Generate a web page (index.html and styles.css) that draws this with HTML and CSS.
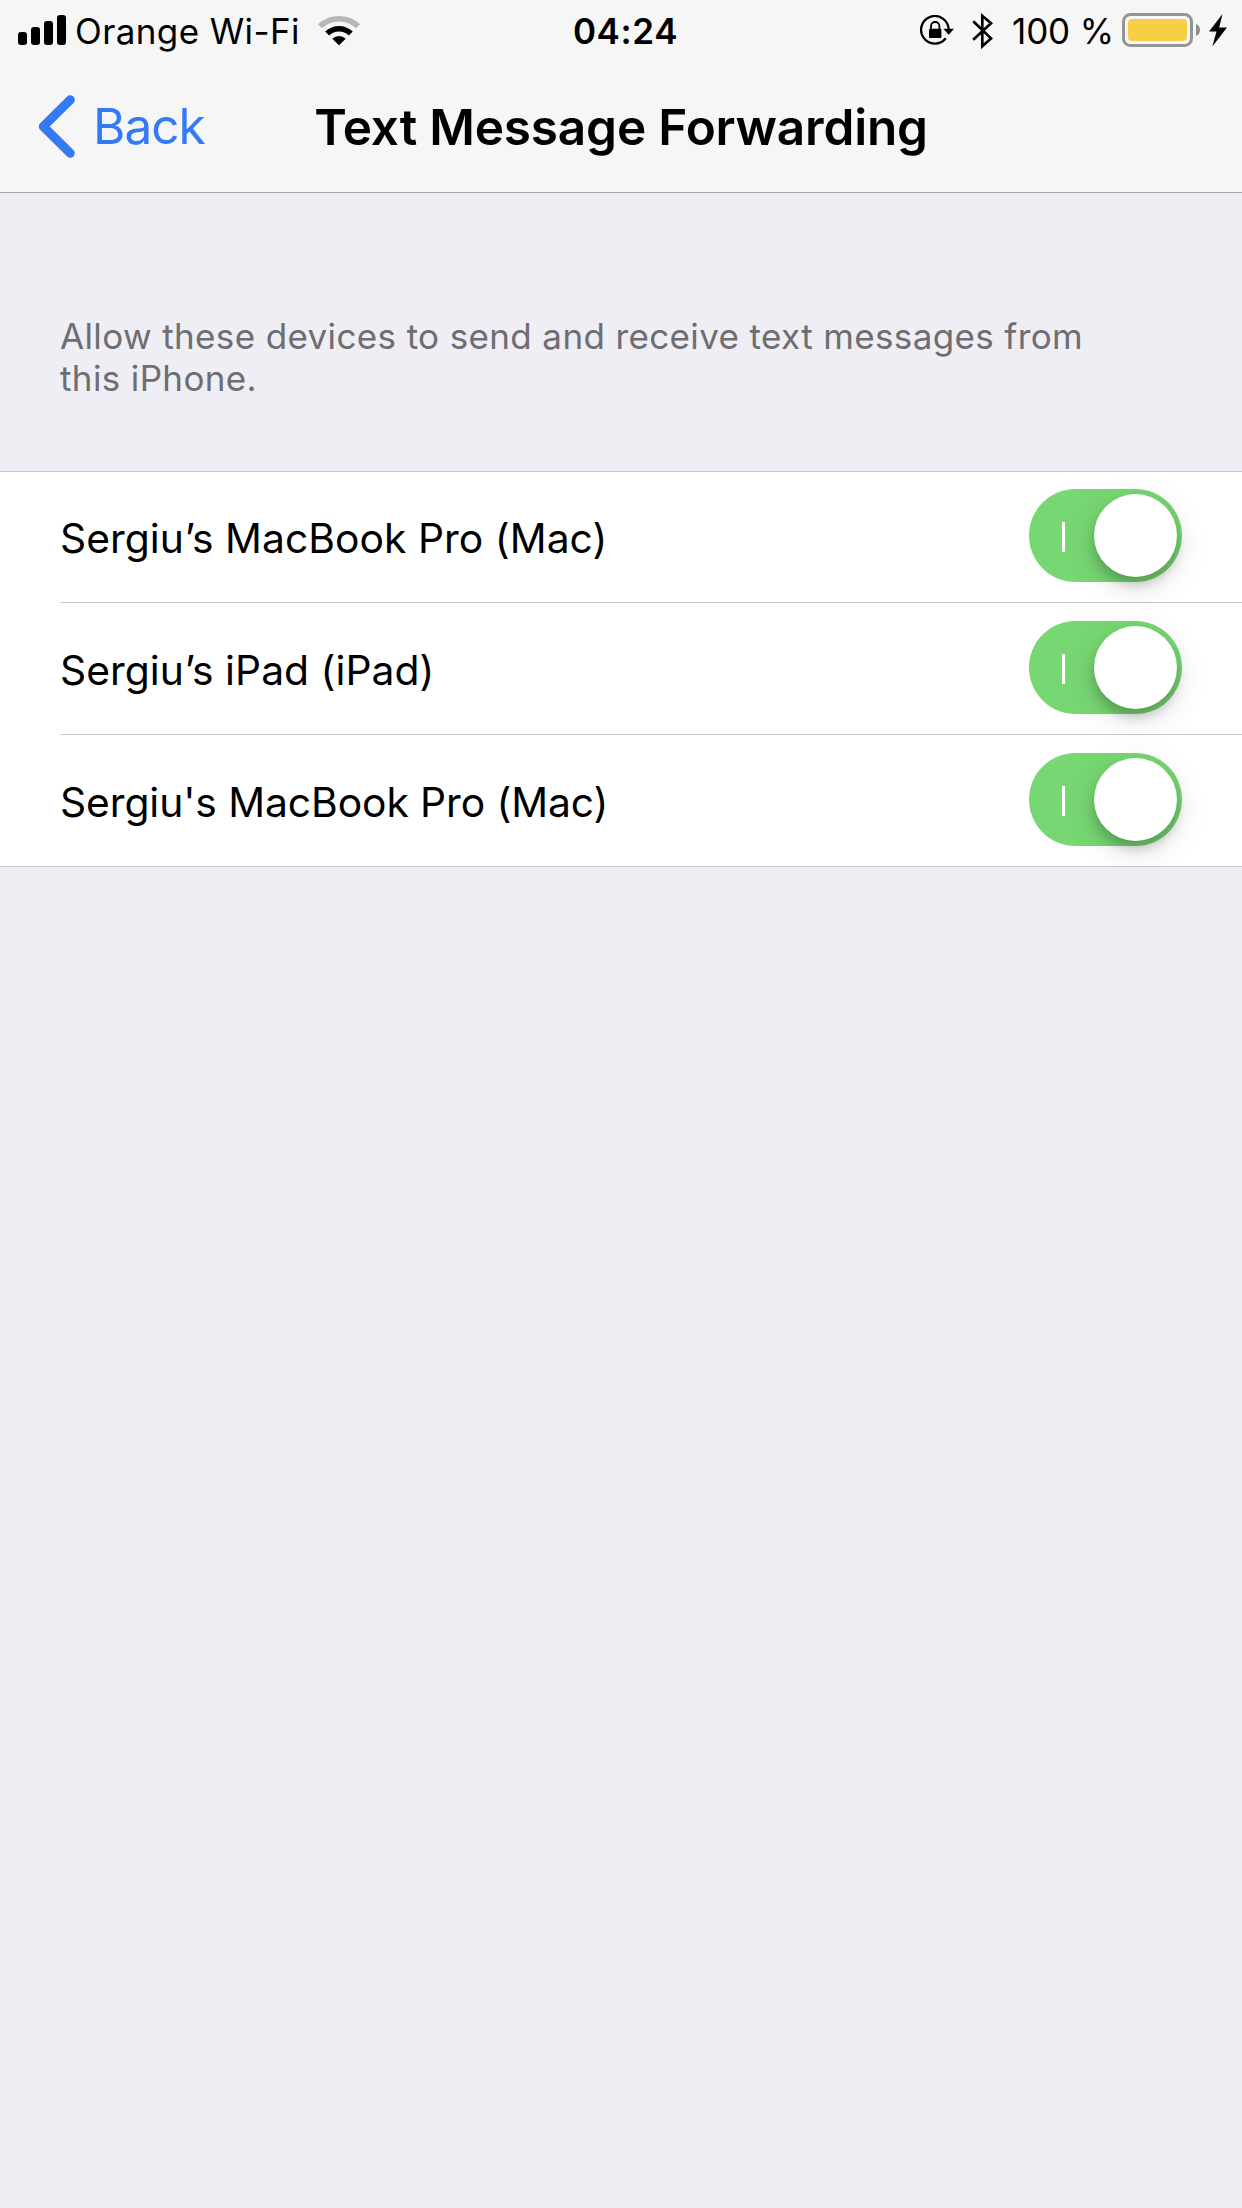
FILE: index.html
```html
<!DOCTYPE html>
<html lang="en">
<head>
<meta charset="utf-8">
<title>Text Message Forwarding</title>
<link rel="stylesheet" href="styles.css">
</head>
<body>
<header class="header">
  <div class="status">
    <div class="status-left">
      <svg class="signal" width="48" height="30" viewBox="0 0 48 30">
        <rect x="0" y="17" width="9" height="13" rx="3"/>
        <rect x="13" y="12" width="9" height="18" rx="3"/>
        <rect x="26" y="6" width="9" height="24" rx="3"/>
        <rect x="39" y="0" width="9" height="30" rx="3"/>
      </svg>
      <span class="carrier">Orange Wi-Fi</span>
      <svg class="wifi" width="42" height="30" viewBox="0 0 42 30">
        <path d="M0 9.3A30.5 30.5 0 0 1 42 9.3L38 13.2A24.6 24.6 0 0 0 4 13.2Z" fill="#b8b8b8"/>
        <path d="M7.2 16.6A20 20 0 0 1 34.8 16.6L30.8 20.6A14 14 0 0 0 11.2 20.6Z"/>
        <path d="M14.3 23.7A9.6 9.6 0 0 1 27.7 23.7L21 30.3Z"/>
      </svg>
    </div>
    <span class="time">04:24</span>
    <div class="status-right">
      <svg class="lock" width="34" height="30" viewBox="0 0 34 30">
        <path d="M28.700 15A13.800 13.800 0 1 0 25.800 23.300" fill="none" stroke="#000" stroke-width="2.300"/>
        <path d="M23.300 13.700H34L28.700 19.800Z"/>
        <rect x="9" y="13.700" width="12.400" height="9.300" rx="1"/>
        <path d="M11 15V11.200A4.200 4.200 0 0 1 19.400 11.200V15" fill="none" stroke="#000" stroke-width="1.800"/>
      </svg>
      <svg class="bluetooth" width="22" height="38" viewBox="0 0 22 38">
        <path d="M1.200 9.200 19 26.400 10.300 34.200V3.800L19 11.200 1.200 27.800" fill="none" stroke="#000" stroke-width="2.700"/>
      </svg>
      <span class="percent">100 %</span>
      <svg class="battery" width="79" height="34" viewBox="0 0 79 34">
        <rect x="1.500" y="1.500" width="68" height="31" rx="7" fill="none" stroke="#949494" stroke-width="3"/>
        <rect x="6" y="6" width="59" height="22" rx="4" fill="#f7ce46"/>
        <path d="M74 11Q78 12.500 78 17T74 23Z" fill="#8e8e8e"/>
      </svg>
      <svg class="bolt" width="18" height="33" viewBox="0 0 18 33">
        <path d="M13.500 0 0 17.500H7.500L3.300 32.500 18 13.500H10.200Z"/>
      </svg>
    </div>
  </div>
  <nav class="nav">
    <a class="back">
      <svg class="chevron" width="37" height="63" viewBox="0 0 37 63">
        <path d="M32.300 4.700 5.300 31.500 32.300 58.300" fill="none" stroke="#347af6" stroke-width="9" stroke-linecap="round" stroke-linejoin="round"/>
      </svg>
      <span class="back-label">Back</span>
    </a>
    <h1 class="title">Text Message Forwarding</h1>
  </nav>
</header>
<main>
  <p class="note">Allow these devices to send and receive text messages from this iPhone.</p>
  <ul class="devices">
    <li class="device"><span class="name">Sergiu’s MacBook Pro (Mac)</span><span class="toggle"><span class="mark"></span><span class="knob"></span></span></li>
    <li class="device"><span class="name">Sergiu’s iPad (iPad)</span><span class="toggle"><span class="mark"></span><span class="knob"></span></span></li>
    <li class="device"><span class="name name-straight">Sergiu's MacBook Pro (Mac)</span><span class="toggle"><span class="mark"></span><span class="knob"></span></span></li>
  </ul>
</main>
</body>
</html>
```
FILE: styles.css
```css
* { box-sizing: border-box; margin: 0; padding: 0; }
body {
  min-height: 2208px;
  background: #efeef4;
  color: #000;
  font-family: Inter, "Liberation Sans", sans-serif;
}
svg { display: block; flex: none; }

.header { height: 193px; background: #f6f6f6; border-bottom: 1px solid #a8a7ac; }
.status {
  display: grid;
  grid-template-columns: 1fr auto 1fr;
  height: 62px;
  padding: 0 15px 0 18px;
  font-size: 35px;
  line-height: 62px;
  white-space: nowrap;
}
.status-left, .status-right { display: flex; align-items: flex-start; }
.status-right { justify-content: flex-end; }
.signal { margin-top: 15px; }
.carrier { margin-left: 9px; letter-spacing: 0.39px; }
.wifi { margin: 15px 0 0 18px; }
.time { font-weight: 600; letter-spacing: 0.62px; margin-left: 6px; }
.lock { margin-top: 15px; }
.bluetooth { margin: 12px 0 0 18px; }
.percent { margin-left: 18px; letter-spacing: -0.13px; }
.battery { margin: 13px 0 0 8px; }
.bolt { margin: 14px 0 0 8px; }

.nav {
  display: grid;
  grid-template-columns: 1fr auto 1fr;
  align-items: center;
  height: 130px;
  padding: 0 38px;
  font-size: 49.5px;
  line-height: 62px;
}
.back { display: flex; align-items: center; color: #347af6; }
.chevron { margin-top: -1px; }
.back-label { margin: -2px 0 0 18px; letter-spacing: -0.95px; }
.title { font-size: 49.5px; font-weight: 600; letter-spacing: -0.17px; white-space: nowrap; }

.note {
  padding: 122px 120px 72px 60px;
  color: #6d6d72;
  font-size: 35px;
  line-height: 42px;
  letter-spacing: 0.37px;
}
.devices {
  list-style: none;
  padding-left: 60px;
  background: linear-gradient(#c8c7cc, #c8c7cc) 0 0 / 100% 1px no-repeat #fff;
  border-bottom: 1px solid #c8c7cc;
}
.device {
  display: flex;
  justify-content: space-between;
  height: 132px;
  padding-right: 60px;
  border-bottom: 1px solid #c8c7cc;
}
.device:last-child { height: 131px; border-bottom: 0; }
.name { padding-top: 2px; font-size: 40.8px; line-height: 131px; letter-spacing: 0.04px; }
.name-straight { letter-spacing: -0.08px; }
.toggle {
  display: flex;
  align-items: center;
  justify-content: space-between;
  width: 153px;
  height: 93px;
  margin-top: 18px;
  padding: 0 5px 0 33px;
  border-radius: 47px;
  background: #77d772;
}
.mark { width: 3px; height: 30px; margin-top: 3px; background: #fff; }
.knob {
  width: 83px;
  height: 83px;
  border-radius: 50%;
  background: #fff;
  box-shadow: 0 9px 32px rgba(0, 0, 0, 0.14), 0 8px 11px rgba(0, 0, 0, 0.18);
}
```
